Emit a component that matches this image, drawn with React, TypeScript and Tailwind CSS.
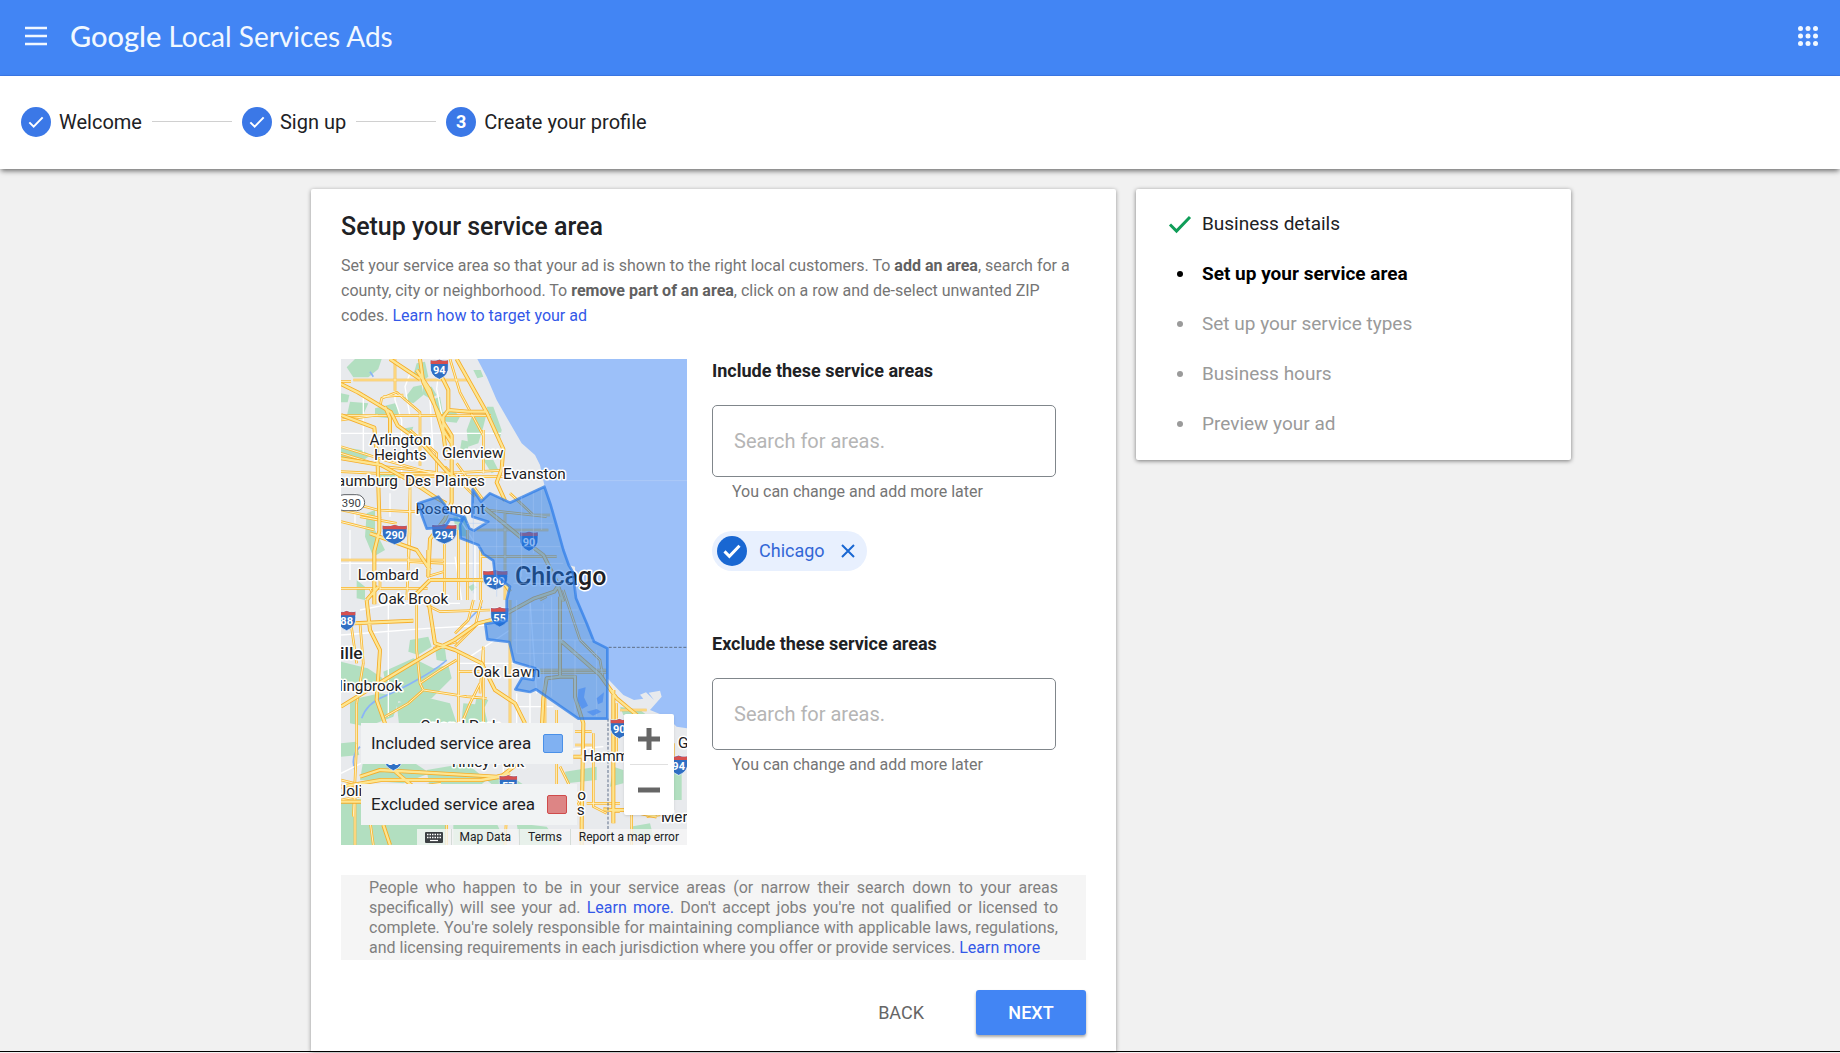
import { useId } from 'react';
import type { ReactNode } from 'react';
import { clsx } from 'clsx';

type Point = { x: number; y: number };

interface MapLabel extends Point {
  text: string;
  size?: number;
  bold?: boolean;
}

interface Shield extends Point {
  text: string;
}

const steps = [
  { label: 'Welcome', done: true },
  { label: 'Sign up', done: true },
  { label: 'Create your profile', done: false },
];

const sections = [
  { label: 'Business details', state: 'done' },
  { label: 'Set up your service area', state: 'current' },
  { label: 'Set up your service types', state: 'todo' },
  { label: 'Business hours', state: 'todo' },
  { label: 'Preview your ad', state: 'todo' },
];

/* ---------- map data ---------- */
const parks = [
  'M75 27h80l-10 30-30 25-45 0-20-30z',
  'M33 130l25 5-5 22-20 0z',
  'M60 155l55 5-20 45-45-5z',
  'M135 175l60-15 15 30-30 15-45-5z',
  'M250 110l25-5 5 30-30 25-30-10z',
  'M280 110l25 0 15 25-18 12-25-15z',
  'M260 40l25-5 10 45-20 15-25-20z',
  'M305 150l25-10 8 45-22 5z',
  'M320 190l50-10 20 20-10 18-50-5z',
  'M425 200l45-10-10 40-15 50-30 10-5-50z',
  'M470 170l20 0 25 70-5 25-20-15z',
  'M395 270l25 5-10 30-20-5z',
  'M33 290l60 10 30 15-30 20-60-10z',
  'M140 365l50 0 15 30-35 15-30-15z',
  'M430 60l22 0 8 20-18 5z',
  'M110 490l25-10 0 60 30 60-35 20-25-60z',
  'M80 690l25 20 0 40-25-5z',
  'M460 330l30 0 15 30-20 10z',
  'M370 500l40 0 0 60-30-5z',
  'M415 710l15-8 10 10-15 12z',
  'M225 235l25-5-5 15-25 0z',
  'M33 935l80 20 45 30-20 25-60 0-45-20z',
  'M160 965l90-40 60 30 45-10 10 40-60 60-70 20-60-25z',
  'M60 1050l90-20 60 10-20 60-80 30-50-10z',
  'M200 1060l80-20 80 20 20 60-90 10-80 20z',
  'M240 870l55-10 10 30-40 25-30-10z',
  'M315 890l30 5 5 40-30-5z',
  'M400 1060l60 5 15 60-60 15-20-30z',
  'M33 1180l45-5 10 40-55 5z',
  'M100 1230l140 0 60 40-80 30-130-10z',
  'M290 1260l120-20 60 50-60 50-110-20z',
  'M33 1350l90-5 170 10 60 60 0 70-320 0z',
  'M470 1290l60-20 60 40-60 30z',
  'M370 1420l60-20 70 20 30 65-160 0z',
  'M705 1265l95-15 0 40-90 10z',
  'M560 1420l90 10 40 55-120 0z',
  'M440 1040l35 10-10 20-30-5z',
  'M1020 1270l35 0 0 80-30 0z',
  'M850 1250l30 10 0 40-40 10z',
  'M900 1430l60-10 10 40-65 5z',
  'M870 1070l60 10 20 15-70 0z',
];

const minorRoads = [
  'M33 250h480M195 60v90l20 60v180M100 130v180M75 430v90M180 430v70M240 70l-15 40 15 90',
  'M33 640h420M60 540v150M33 855l260-20 180-10M175 750v350M90 780l100-20 200 0',
  'M440 380h170M385 500l50 80v170M600 750l20 280M560 1030v160M600 1020v140M560 1070h110',
  'M390 940h190M420 920l120-80M520 1190v200M700 1200l120-10M1071 392h-430',
  'M330 27l-10 90 20 100M300 150l10 160M375 620l20 130M33 1270l80-40',
];

const arterials = [
  'M33 95h30M33 197h450M33 210l110-15M70 90h345M195 27v95',
  'M150 170l5-25 45-18 70 60v160M160 140l60-5M33 290l130 40 180 50M33 310l130 40 180 20',
  'M33 365l110 5 200 0 190-10M200 380h340M240 390v160l-10 200M240 420l-5 200',
  'M33 480l120 25M33 450l110 30 100 5h90M90 500l110 20M33 630h310M33 515l100 25',
  'M240 240l80 70 0 90M460 240v130M360 27l30 100 70 130M380 340l80 110M345 350l90 90',
  'M343 540v210M385 540v210M412 540v210M452 600v150M385 690v60M33 715h260M120 715l15 35',
  'M235 635l110 5M290 680l50-15M150 660v60M525 490v260M440 540h215M470 480l180 20M450 620h230',
  'M540 430l70 65h50M290 765l40 20 150-5M430 750l-15 60-40 40M455 750l-20 80-60 60',
  'M260 750v150l10 100 10 20-45 40-70 40M280 1020l130 20 60 5M270 1000l60-40 50-30',
  'M310 895l70-20M385 900v250M460 900v240M450 1000l-30 60-25 60M385 965l70 0M460 890l-10 140',
  'M90 820l10 120-20 120 0 120-10 220M60 800l20 140M33 1290l40 10M75 1330v155M110 1340l20 145',
  'M540 750v500M645 1040v200M680 1080v250M530 1390l-5 95M735 1145h50M735 1185h50M735 1220h30',
  'M790 1150v220l40 20M770 1360h100M620 960h210M620 967h210M33 1350l150-30 150-20M350 1420v65',
  'M870 1080h80M860 1060v160M905 1395v90M1030 1180v70M950 1400l70-10M1000 1300v100',
  'M630 750l20-10M700 720l20 60 30 90 60 60 10 60M580 1350l60 30M690 1250l60 120',
];

const motorways = [
  'M33 102l50 25 100 60 20 40 70 50 80 90 30 20',
  'M260 60l40 60 40 130 10 80M180 27l90 60M180 250v-45l-15-35',
  'M270 27l10 70 60 120 25 40v200l-20 50-45 60-5 110',
  'M335 80l20 40v60l-15 20 0 40 25 40',
  'M355 180l60 5h55M380 27l90 160 50 110-5 60-15 40 25 55',
  'M33 325l120 20 100 55 60 40 35 20M33 195l100 38 10 110 5 160 0 40-15 60 0 160',
  'M120 550l140 50 40 60',
  'M295 600v80M300 690l-60 60M300 690h150l70 5 20 30',
  'M465 475l75 60 60 50 40 30 40 80 20 60',
  'M295 750l20 130 60 20 80 40 40 80 60 40 30 60M110 750l10 90 30 60-10 150 25 70',
  'M70 820l180-8M33 1070l130-80 150-90 60-30 70-50 60-15 110-60 60-20 20-30',
  'M110 750l35-40',
  'M690 740v240M690 870l120 105 50 70 60 50 30 30 0 120',
  'M690 980l-40 5-10 60-5 100M690 980l45 0 0 60 25 80-5 300v65',
  'M850 1020v400M33 1310l120-20 300 0 60-10 50-40',
  'M90 1280l60-20 350 20 40-10M190 1260l60 50M160 1425l20 60M830 1380h60l90 20',
  'M33 1355h70l50-20M730 1220h40M820 1378l50 4',
];

const cityOutline =
  'M643 410L540 458L480 430L453 455L428 418L427 500L475 515L432 542L418 535L403 500L390 525L392 565L445 585L460 612L490 632L495 675L540 710L530 750V812L466 822L472 868L538 876L552 936L616 955L610 990L576 984L556 1018L600 1026L618 1018L745 1106L832 1106V895L792 875L770 820L738 745L728 665L716 645L700 600L682 535L662 465Z';
const airportOutline = 'M265 460L325 440L345 465L350 485L398 500L395 512L360 508L345 532L290 536L275 495Z';

const cityStreets =
  'M430 460v270M500 450v290M575 440v240M610 430v180M635 420v120M410 520h260M440 590h250M500 640h200M550 700h170M545 780h200M545 820h220M550 870h240M560 910h240M600 760v220M640 760v260M665 740v300M735 870v220M800 900v200M560 750v160';

const labels: MapLabel[] = [
  { text: 'Arlington', x: 211, y: 285 },
  { text: 'Heights', x: 211, y: 329 },
  { text: 'Glenview', x: 428, y: 325 },
  { text: 'Evanston', x: 613, y: 386 },
  { text: 'aumburg', x: 112, y: 408 },
  { text: 'Des Plaines', x: 345, y: 407 },
  { text: 'Rosemont', x: 361, y: 492 },
  { text: 'Lombard', x: 175, y: 689 },
  { text: 'Oak Brook', x: 249, y: 762 },
  { text: 'ille', x: 64, y: 927, size: 52, bold: true },
  { text: 'Oak Lawn', x: 530, y: 982 },
  { text: 'lingbrook', x: 122, y: 1022 },
  { text: 'Orland Park', x: 390, y: 1144 },
  { text: 'Tinley Park', x: 470, y: 1251 },
  { text: 'Joli', x: 60, y: 1339 },
  { text: 'Hamm', x: 828, y: 1233 },
  { text: 'G', x: 1060, y: 1195 },
  { text: 'o', x: 755, y: 1350 },
  { text: 's', x: 752, y: 1394 },
  { text: 'Mer', x: 1033, y: 1416 },
  { text: 'Chicago', x: 692, y: 705, size: 75, bold: true },
];

const shields: Shield[] = [
  { text: '94', x: 328, y: 58 },
  { text: '290', x: 194, y: 554 },
  { text: '294', x: 343, y: 552 },
  { text: '90', x: 597, y: 574 },
  { text: '290', x: 496, y: 690 },
  { text: '88', x: 50, y: 812 },
  { text: '55', x: 509, y: 801 },
  { text: '57', x: 535, y: 1305 },
  { text: '80', x: 190, y: 1232 },
  { text: '90', x: 868, y: 1136 },
  { text: '94', x: 1046, y: 1246 },
];

/* ---------- icons ---------- */
function MenuIcon() {
  return (
    <svg viewBox="0 0 24 24" className="h-6 w-6" fill="none" stroke="currentColor" strokeWidth="2.5" aria-hidden="true">
      <path d="M1 4h22M1 12h22M1 20h22" />
    </svg>
  );
}

function AppsIcon() {
  return (
    <svg viewBox="0 0 20 20" className="h-5 w-5" fill="currentColor" aria-hidden="true">
      {[2.5, 10, 17.5].map((y) => [2.5, 10, 17.5].map((x) => <circle key={`${x}-${y}`} cx={x} cy={y} r="2.5" />))}
    </svg>
  );
}

function CheckIcon({ className, weight = 2 }: { className?: string; weight?: number }) {
  return (
    <svg viewBox="0 0 24 24" className={className} fill="none" stroke="currentColor" strokeWidth={weight} aria-hidden="true">
      <path d="M2 12.500L8.500 19L22 5" />
    </svg>
  );
}

function KeyboardIcon() {
  return (
    <svg viewBox="0 0 18 11" className="h-[11px] w-[18px]" aria-hidden="true">
      <rect width="18" height="11" rx="1" fill="#3c4043" />
      <path
        d="M2 2.500h14M2 5.500h14"
        stroke="#fff"
        strokeWidth="1.500"
        strokeDasharray="1.500 1"
      />
      <path d="M5 8.500h8" stroke="#fff" strokeWidth="1.200" />
    </svg>
  );
}

function InterstateShield({ x, y, text }: Shield) {
  const w = text.length > 2 ? 37 : 27;
  return (
    <g transform={`translate(${x} ${y})`}>
      <path
        d={`M${-w} -28Q${-w / 2} -24 0 -30Q${w / 2} -24 ${w} -28L${w} -10Q${w + 3} 18 0 30Q${-w - 3} 18 ${-w} -10Z`}
        fill="#2f6fc4"
        stroke="#fff"
        strokeWidth="2"
      />
      <path d={`M${-w + 1} -27Q${-w / 2} -23 0 -29Q${w / 2} -23 ${w - 1} -27V-16H${-w + 1}Z`} fill="#d6504f" />
      <text y="14" textAnchor="middle" fontSize="33" fontWeight="700" fill="#fff">
        {text}
      </text>
    </g>
  );
}

function ServiceMap() {
  return (
    <svg
      viewBox="33 27 1038 1458"
      preserveAspectRatio="xMidYMid slice"
      className="absolute inset-0 h-full w-full font-[Roboto,sans-serif]"
      role="img"
      aria-label="Map of the Chicago service area"
    >
      <rect x="33" y="27" width="1038" height="1458" fill="#e8eaed" />
      <g fill="#b2dfc0">
        {parks.map((d) => (
          <path key={d} d={d} />
        ))}
      </g>
      <path d="M95 1105Q110 1060 160 1040T270 985T350 930M75 1260Q60 1220 90 1190M120 65l10 15M395 830l60-60" fill="none" stroke="#8ab4f8" strokeWidth="5" />
      <g fill="none" stroke="#fff" strokeWidth="4">
        {minorRoads.map((d) => (
          <path key={d} d={d} />
        ))}
      </g>
      <g fill="none" strokeLinejoin="round">
        <path d={arterials.join('')} stroke="#f9b934" strokeWidth="8" />
        <path d={arterials.join('')} stroke="#fff2c6" strokeWidth="3" />
        <path d={motorways.join('')} stroke="#f5ac28" strokeWidth="12" />
        <path d={motorways.join('')} stroke="#fde590" strokeWidth="7" />
      </g>

      {/* Lake Michigan */}
      <path
        d="M442 27L470 80L500 150L540 220L575 280L615 315L630 345L643 405L662 465L682 535L700 600L716 645L735 650L738 745L770 820L792 875L832 895V985L880 1035L912 1050L940 1046L930 1034L948 1027L972 1050L956 1028L990 1022L995 1040L960 1080L1010 1100L1040 1130L1071 1135V27Z"
        fill="#9cc0f9"
      />
      <path d="M641 392H1071" stroke="#b5cff8" strokeWidth="2" />
      <path d="M836 892H1071M834 1106V1485" fill="none" stroke="#5f6f88" strokeWidth="3" strokeDasharray="9 5" />

      {shields.map((s) => (
        <InterstateShield key={`${s.text}-${s.x}`} {...s} />
      ))}
      <rect x="18" y="434" width="86" height="48" rx="24" fill="#fff" stroke="#5f6368" strokeWidth="3" />
      <text x="64" y="470" textAnchor="middle" fontSize="34" fill="#3c4043">
        390
      </text>

      {labels.map(({ text, x, y, size = 46, bold }) => (
        <text
          key={text}
          x={x}
          y={y}
          textAnchor="middle"
          fontSize={size}
          fontWeight={bold ? 500 : 400}
          fill="#202124"
          stroke="#fff"
          strokeWidth="9"
          strokeLinejoin="round"
          paintOrder="stroke"
        >
          {text}
        </text>
      ))}

      {/* included area */}
      <g fill="#1a73e8" fillOpacity="0.5" stroke="#2f7de8" strokeOpacity="0.75" strokeWidth="8" strokeLinejoin="round">
        <path d={cityOutline} />
        <path d={airportOutline} />
      </g>
      <path d={cityStreets} fill="none" stroke="#a9c8f5" strokeOpacity="0.4" strokeWidth="3" />
      <path
        d="M745 1018l22-6-5 30 12 25-18 10-14-25zM800 1045l22-18-4 30-14 6zM770 1085l30-8 14 8-25 12z"
        fill="#4a8cf0"
        fillOpacity="0.7"
      />
    </svg>
  );
}

function LegendItem({ label, swatch }: { label: string; swatch: string }) {
  return (
    <div className="flex h-[41px] w-fit items-center gap-3 bg-[#f1f3f4] px-2.5 text-[17px] text-[#202124]">
      {label}
      <span className={clsx('h-[19px] w-5 rounded-xs border', swatch)} />
    </div>
  );
}

function MapPanel() {
  return (
    <div className="relative h-[486px] w-[346px] shrink-0 overflow-hidden">
      <ServiceMap />
      <div className="absolute bottom-5 left-5 flex flex-col gap-5">
        <LegendItem label="Included service area" swatch="border-[#4a90e8] bg-[#80b1f2]" />
        <LegendItem label="Excluded service area" swatch="border-[#cf4b4b] bg-[#dd8585]" />
      </div>
      <div className="absolute right-[13px] bottom-[30px] flex w-[50px] flex-col rounded-xs bg-white px-1.5 shadow">
        <button type="button" aria-label="Zoom in" className="flex h-[50px] items-center justify-center">
          <svg viewBox="0 0 24 24" className="h-6 w-6" stroke="#666" strokeWidth="5" aria-hidden="true">
            <path d="M12 1v22M1 12h22" />
          </svg>
        </button>
        <button type="button" aria-label="Zoom out" className="flex h-[51px] items-center justify-center border-t border-[#e0e0e0]">
          <svg viewBox="0 0 24 24" className="h-6 w-6" stroke="#666" strokeWidth="5" aria-hidden="true">
            <path d="M1 12h22" />
          </svg>
        </button>
      </div>
      <div className="absolute right-0 bottom-0 flex h-4 items-center bg-[#f5f5f5]/80 text-xs leading-4 text-[#202124]">
        <button type="button" aria-label="Keyboard shortcuts" className="px-2">
          <KeyboardIcon />
        </button>
        <button type="button" className="border-l border-[#d5dcd8] px-2">
          Map Data
        </button>
        <a href="#terms" className="border-l border-[#d5dcd8] px-2">
          Terms
        </a>
        <a href="#report" className="border-l border-[#d5dcd8] px-2">
          Report a map error
        </a>
      </div>
    </div>
  );
}

function AreaSearch({ label, children }: { label: string; children?: ReactNode }) {
  const id = useId();
  return (
    <div>
      <label htmlFor={id} className="block text-lg leading-6 font-bold text-[#202124]">
        {label}
      </label>
      <input
        id={id}
        type="text"
        placeholder="Search for areas."
        className="mt-[22px] block h-[72px] w-full rounded-[5px] border border-[#80868b] px-[21px] text-xl text-[#202124] placeholder:text-[#b5b5b5]"
      />
      <p className="mt-1 pl-5 text-base leading-[22px] text-[#757575]">You can change and add more later</p>
      {children}
    </div>
  );
}

function Link({ href, children }: { href: string; children: ReactNode }) {
  return (
    <a href={href} className="text-[#3358e8]">
      {children}
    </a>
  );
}

export default function App() {
  return (
    <div className="flex min-h-screen flex-col bg-[#f1f1f1] pb-px font-[Roboto,sans-serif] text-[#202124]">
      <header className="flex h-[76px] items-center border-b border-[#3b78e7] bg-[#4285f4] px-6 pb-1 text-[#f1f8ff]">
        <button type="button" aria-label="Menu">
          <MenuIcon />
        </button>
        <h1 className="ml-[22px] font-[Lato,sans-serif] text-[28px] leading-9">
          <span className="text-[29px] font-medium">Google</span> Local Services Ads
        </h1>
        <button type="button" aria-label="Google apps" className="ml-auto -mr-0.5">
          <AppsIcon />
        </button>
      </header>

      <nav aria-label="Progress" className="bg-white shadow-[0_3px_5px_-1px_rgba(0,0,0,0.55)]">
        <ol className="flex h-[93px] items-center gap-2.5 px-[21px] pb-0.5">
          {steps.map((step, i) => (
            <li key={step.label} className="flex items-center gap-2.5">
              {i > 0 && <span className="h-px w-20 bg-[#d0d0d0]" />}
              <span className="flex items-center gap-2 text-xl">
                <span className="flex h-[30px] w-[30px] items-center justify-center rounded-full bg-[#3b78e7] text-lg font-bold text-white">
                  {step.done ? <CheckIcon className="h-4 w-4" weight={3} /> : i + 1}
                </span>
                {step.label}
              </span>
            </li>
          ))}
        </ol>
      </nav>

      <main className="flex flex-1 flex-col border-b border-black">
        <div className="mx-auto flex w-full max-w-[1302px] flex-1 items-start gap-5 pt-5 pl-[42px]">
          <section className="flex-1 self-stretch rounded-t-xs bg-white px-[30px] pt-5 shadow-[0_1px_4px_rgba(0,0,0,0.4)]">
            <h2 className="text-[25px] leading-9 font-medium">Setup your service area</h2>
            <p className="mt-2 text-base leading-[25px] text-[#757575]">
              Set your service area so that your ad is shown to the right local customers. To{' '}
              <b className="font-bold text-[#616161]">add an area</b>, search for a county, city or neighborhood. To{' '}
              <b className="font-bold text-[#616161]">remove part of an area</b>, click on a row and de-select unwanted ZIP
              codes. <Link href="#target">Learn how to target your ad</Link>
            </p>

            <div className="mt-[31px] flex gap-[25px]">
              <MapPanel />
              <div className="mr-[30px] flex-1">
                <AreaSearch label="Include these service areas">
                  <div className="mt-7 flex h-10 w-fit items-center rounded-full bg-[#e8f0fe] pr-3 pl-[5px] text-lg text-[#3367d6]">
                    <span className="flex h-[30px] w-[30px] items-center justify-center rounded-full bg-[#1967d2] text-white">
                      <CheckIcon className="h-[18px] w-[18px]" weight={4} />
                    </span>
                    <span className="ml-3">Chicago</span>
                    <button type="button" aria-label="Remove Chicago" className="ml-4">
                      <svg viewBox="0 0 14 14" className="h-3.5 w-3.5" stroke="#1967d2" strokeWidth="2" aria-hidden="true">
                        <path d="M1 1l12 12M13 1L1 13" />
                      </svg>
                    </button>
                  </div>
                </AreaSearch>
                <div className="mt-[61px]">
                  <AreaSearch label="Exclude these service areas" />
                </div>
              </div>
            </div>

            <p className="mt-[30px] bg-[#f5f5f5] px-7 pt-[3px] pb-0.5 text-justify text-base leading-5 text-[#808080]">
              People who happen to be in your service areas (or narrow their search down to your areas specifically) will see
              your ad. <Link href="#learn-areas">Learn more.</Link> Don't accept jobs you're not qualified or licensed to
              complete. You're solely responsible for maintaining compliance with applicable laws, regulations, and licensing
              requirements in each jurisdiction where you offer or provide services.{' '}
              <Link href="#learn-licensing">Learn more</Link>
            </p>

            <div className="mt-[30px] flex justify-end gap-5">
              <button type="button" className="h-[45px] px-8 text-lg text-[#666]">
                BACK
              </button>
              <button
                type="button"
                className="h-[45px] w-[110px] rounded-[3px] bg-[#4285f4] text-lg font-medium text-white shadow-[0_2px_3px_rgba(0,0,0,0.35)]"
              >
                NEXT
              </button>
            </div>
          </section>

          <aside className="w-[435px] shrink-0 rounded-xs bg-white pt-[10px] pb-[11px] pl-8 shadow-[0_1px_4px_rgba(0,0,0,0.5)]">
            <ol>
              {sections.map(({ label, state }) => (
                <li
                  key={label}
                  className={clsx('flex h-[50px] items-center gap-2.5 text-[19px]', {
                    'font-bold text-black': state === 'current',
                    'text-[#9a9a9a]': state === 'todo',
                  })}
                  aria-current={state === 'current' ? 'step' : undefined}
                >
                  <span className="flex w-6 justify-center">
                    {state === 'done' ? (
                      <CheckIcon className="h-6 w-6 text-[#0f9d58]" weight={3} />
                    ) : (
                      <span className="h-1.5 w-1.5 rounded-full bg-current" />
                    )}
                  </span>
                  {label}
                </li>
              ))}
            </ol>
          </aside>
        </div>
      </main>
    </div>
  );
}
